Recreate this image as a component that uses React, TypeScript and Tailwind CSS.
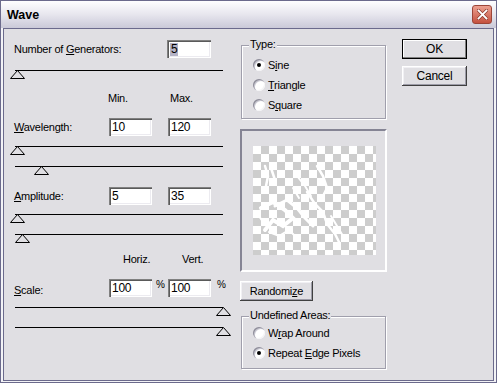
import type { ReactNode } from "react";

const raised =
  "shadow-[inset_-1px_-1px_0_#404040,inset_1px_1px_0_#ffffff,inset_-2px_-2px_0_#9d9ca8,inset_2px_2px_0_#f1f0f4]";

const Thumb = () => (
  <svg width="15" height="10" viewBox="0 0 15 10" className="block">
    <polygon points="7.5,0.5 14.5,8.5 0.5,8.5" fill="#e0dfe3" stroke="#000" strokeWidth="1" />
  </svg>
);

const Slider = ({ at, className = "" }: { at: string; className?: string }) => (
  <div className={`relative ml-[5px] h-[10px] w-[208px] border-t border-black ${className}`}>
    <div className={`absolute top-[-1px] ${at}`}>
      <Thumb />
    </div>
  </div>
);

const Field = ({ children, w = "w-[43px]" }: { children: ReactNode; w?: string }) => (
  <div
    className={`flex h-[18px] ${w} items-center bg-white pl-[3px] text-[12px] shadow-[inset_1px_1px_0_#808080,inset_2px_2px_0_#5a5a5a,inset_-1px_-1px_0_#ffffff,inset_-2px_-2px_0_#ecebf0]`}
  >
    {children}
  </div>
);

const Radio = ({ checked, children }: { checked?: boolean; children: ReactNode }) => (
  <div className="flex h-[20px] items-center">
    <span className="flex h-[12px] w-[12px] items-center justify-center rounded-full bg-white shadow-[inset_1px_1px_0_#8f8e9a,inset_2px_2px_0_#c9c8d2,inset_-1px_-1px_0_#f4f4f6]">
      {checked && <span className="h-[4px] w-[4px] rounded-full bg-black" />}
    </span>
    <span className="ml-[3px]">{children}</span>
  </div>
);

const Group = ({ label, className, children }: { label: string; className: string; children: ReactNode }) => (
  <div
    className={`relative mx-[1px] border border-[#a09fac] shadow-[inset_1px_1px_0_#ffffff,1px_1px_0_#ffffff] ${className}`}
  >
    <span className="absolute left-[7px] top-[-8px] bg-[#e0dfe3] px-[1px] leading-[13px]">{label}</span>
    {children}
  </div>
);

const Checker = () => (
  <div className="relative h-[109px] w-[123px] bg-[image:conic-gradient(#cdcdcd_90deg,#ffffff_90deg_180deg,#cdcdcd_180deg_270deg,#ffffff_270deg)] bg-[length:16px_16px]">
    <svg width="123" height="109" className="absolute left-0 top-0" fill="none" stroke="#fff" strokeLinecap="round">
      <path d="M12 20 L15 30 L13 40 M18 22 L22 34" strokeWidth="2.5" />
      <path d="M64 20 L70 30 L74 42 L70 50" strokeWidth="2.5" />
      <path d="M44 30 L52 40 L58 50 M40 42 L46 52" strokeWidth="2" />
      <path d="M8 62 L20 56 L32 64 L40 72 L30 80 L20 74 L12 84" strokeWidth="4" />
      <path d="M22 60 L34 54 L44 62 L52 72 L60 80" strokeWidth="3" />
      <path d="M16 86 L26 90 L36 84 L44 92" strokeWidth="2" />
      <path d="M54 46 L62 58 L70 66 L74 78 L82 88 L86 96" strokeWidth="2.5" />
      <path d="M78 70 L84 80 L90 90" strokeWidth="2" />
      <path d="M6 70 L10 76" strokeWidth="2" />
    </svg>
  </div>
);

export default function App() {
  return (
    <div className="flex h-[383px] w-[497px] flex-col border border-[#6b6a8c] bg-[#f3f3f6] font-['Liberation_Sans',Arial,sans-serif] text-[11px] leading-[13px] tracking-[-0.25px] text-black">
      <div className="flex h-[27px] shrink-0 items-center justify-between bg-gradient-to-b from-[#fefeff] via-[#e7e6ee] to-[#cac9d8] pl-[6px] pr-[4px]">
        <span className="pt-[2px] text-[12.5px] font-bold tracking-normal">Wave</span>
        <div className="flex h-[19px] w-[20px] items-center justify-center rounded-[3px] border border-[#9c4538] bg-gradient-to-b from-[#eca090] to-[#c4503f]">
          <svg width="11" height="11" viewBox="0 0 11 11">
            <path d="M1.5 1.5 L9.5 9.5 M9.5 1.5 L1.5 9.5" stroke="#8a3a2e" strokeWidth="3.2" strokeLinecap="square" />
            <path d="M1.5 1.5 L9.5 9.5 M9.5 1.5 L1.5 9.5" stroke="#fff" strokeWidth="1.8" strokeLinecap="square" />
          </svg>
        </div>
      </div>

      <div className="mx-[2px] mb-[1px] flex flex-1 items-start border border-[#6b6a8c] bg-[#e0dfe3]">
        {/* left column */}
        <div className="ml-[6px] mt-[11px] flex w-[222px] flex-col">
          <div className="flex h-[18px] items-center">
            <span className="w-[157px] pl-[4px]">
              Number of <u>G</u>enerators:
            </span>
            <Field w="w-[44px]">
              <span className="bg-[#b4b3c6] px-[1px]">5</span>
            </Field>
          </div>
          <Slider at="left-[-5px]" className="mt-[12px]" />

          <div className="mt-[12px] flex">
            <span className="ml-[98px] w-[62px]">Min.</span>
            <span>Max.</span>
          </div>
          <div className="mt-[13px] flex h-[18px] items-center">
            <span className="w-[99px] pl-[4px]">
              <u>W</u>avelength:
            </span>
            <Field>10</Field>
            <span className="w-[16px]" />
            <Field>120</Field>
          </div>
          <Slider at="left-[-5px]" className="mt-[10px]" />
          <Slider at="left-[19px]" className="mt-[10px]" />

          <div className="mt-[11px] flex h-[18px] items-center">
            <span className="w-[99px] pl-[4px]">
              <u>A</u>mplitude:
            </span>
            <Field>5</Field>
            <span className="w-[16px]" />
            <Field>35</Field>
          </div>
          <Slider at="left-[-5px]" className="mt-[9px]" />
          <Slider at="left-[0px]" className="mt-[10px]" />

          <div className="mt-[9px] flex">
            <span className="ml-[113px] w-[59px]">Horiz.</span>
            <span>Vert.</span>
          </div>
          <div className="mt-[13px] flex h-[18px] items-center">
            <span className="w-[99px] pl-[4px] pt-[4px]">
              <u>S</u>cale:
            </span>
            <Field>100</Field>
            <span className="w-[16px] self-start pl-[4px] text-[10px] leading-[11px]">%</span>
            <Field>100</Field>
            <span className="ml-[6px] self-start text-[10px] leading-[11px]">%</span>
          </div>
          <Slider at="left-[201px]" className="mt-[10px]" />
          <Slider at="left-[201px]" className="mt-[10px]" />
        </div>

        {/* middle column */}
        <div className="ml-[8px] mt-[16px] flex w-[147px] flex-col">
          <Group label="Type:" className="h-[74px] pl-[11px] pt-[9px]">
            <Radio checked>
              S<u>i</u>ne
            </Radio>
            <Radio>
              <u>T</u>riangle
            </Radio>
            <Radio>
              S<u>q</u>uare
            </Radio>
          </Group>

          <div className="mt-[10px] h-[143px] border-2 border-b-white border-l-[#858494] border-r-white border-t-[#858494] pl-[11px] pt-[15px]">
            <Checker />
          </div>

          <button className={`mt-[9px] h-[20px] w-[73px] bg-[#e0dfe3] text-[11px] ${raised}`}>
            Randomi<u>z</u>e
          </button>

          <Group label="Undefined Areas:" className="mt-[15px] h-[53px] pl-[11px] pt-[6px]">
            <Radio>
              W<u>r</u>ap Around
            </Radio>
            <Radio checked>
              Repeat <u>E</u>dge Pixels
            </Radio>
          </Group>
        </div>

        {/* buttons */}
        <div className="ml-[15px] mt-[10px] flex w-[65px] flex-col">
          <button className="h-[20px] w-[65px] border border-black bg-[#e0dfe3] text-[12px] shadow-[inset_-1px_-1px_0_#808080,inset_1px_1px_0_#ffffff]">
            OK
          </button>
          <button className={`mt-[7px] h-[20px] w-[65px] bg-[#e0dfe3] text-[12px] ${raised}`}>Cancel</button>
        </div>
      </div>
    </div>
  );
}
